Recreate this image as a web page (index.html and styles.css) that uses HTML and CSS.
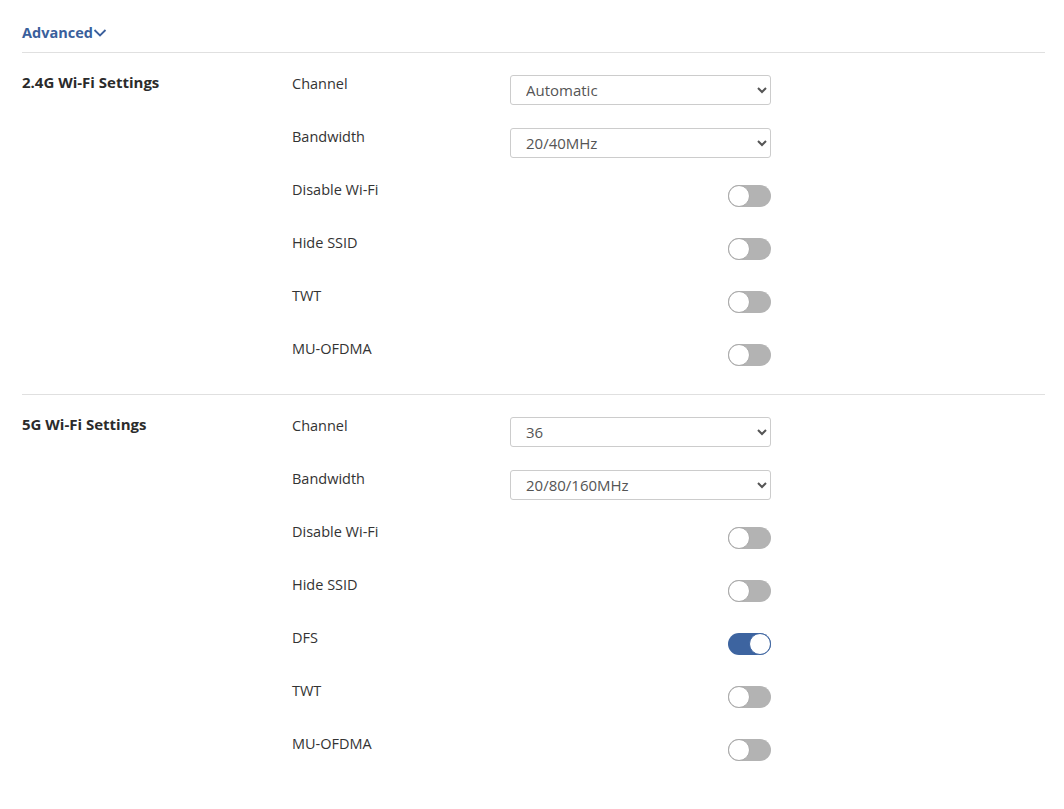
FILE: index.html
```html
<!DOCTYPE html>
<html>
<head>
<meta charset="utf-8">
<link rel="stylesheet" href="styles.css">
</head>
<body>
<div class="page">
  <div class="adv-head">
    <span class="adv-title">Advanced</span>
    <svg class="adv-chev" width="14" height="10" viewBox="0 0 14 10"><path d="M1.5 2 L7 7.5 L12.5 2" fill="none" stroke="#3a5f9c" stroke-width="1.8"/></svg>
  </div>

  <section class="group">
    <div class="group-title">2.4G Wi-Fi Settings</div>
    <div class="rows">
      <div class="row"><div class="label">Channel</div><div class="ctrl"><select class="sel"><option>Automatic</option></select></div></div>
      <div class="row"><div class="label">Bandwidth</div><div class="ctrl"><select class="sel"><option>20/40MHz</option></select></div></div>
      <div class="row"><div class="label">Disable Wi-Fi</div><div class="ctrl"><span class="tog"></span></div></div>
      <div class="row"><div class="label">Hide SSID</div><div class="ctrl"><span class="tog"></span></div></div>
      <div class="row"><div class="label">TWT</div><div class="ctrl"><span class="tog"></span></div></div>
      <div class="row"><div class="label">MU-OFDMA</div><div class="ctrl"><span class="tog"></span></div></div>
    </div>
  </section>

  <section class="group">
    <div class="group-title">5G Wi-Fi Settings</div>
    <div class="rows">
      <div class="row"><div class="label">Channel</div><div class="ctrl"><select class="sel"><option>36</option></select></div></div>
      <div class="row"><div class="label">Bandwidth</div><div class="ctrl"><select class="sel"><option>20/80/160MHz</option></select></div></div>
      <div class="row"><div class="label">Disable Wi-Fi</div><div class="ctrl"><span class="tog"></span></div></div>
      <div class="row"><div class="label">Hide SSID</div><div class="ctrl"><span class="tog"></span></div></div>
      <div class="row"><div class="label">DFS</div><div class="ctrl"><span class="tog on"></span></div></div>
      <div class="row"><div class="label">TWT</div><div class="ctrl"><span class="tog"></span></div></div>
      <div class="row"><div class="label">MU-OFDMA</div><div class="ctrl"><span class="tog"></span></div></div>
    </div>
  </section>
</div>
</body>
</html>
```

FILE: styles.css
```css
*, *::before, *::after { box-sizing: border-box; }
html, body { margin: 0; padding: 0; background: #fff; }
body {
  font-family: "Open Sans", "Noto Sans", "Liberation Sans", sans-serif;
  font-size: 14.5px;
  color: #333;
}
.page {
  padding: 0 19px 0 22px;
}
.adv-head {
  height: 53px;
  border-bottom: 1px solid #e0e0e0;
  display: flex;
  align-items: center;
  padding-top: 12px;
}
.adv-title {
  font-weight: 700;
  color: #3a5f9c;
  font-size: 14.5px;
}
.adv-chev { margin-left: 0px; margin-top: 1px; }
.group {
  display: flex;
  padding: 22px 0 24px;
  border-bottom: 1px solid #e0e0e0;
}
.group:last-child { border-bottom: none; }
.group-title {
  width: 270px;
  font-weight: 700;
  font-size: 15px;
  line-height: 15px;
  color: #2b2b2b;
}
.rows {
  display: flex;
  flex-direction: column;
  gap: 23px;
}
.row {
  display: flex;
  height: 30px;
}
.label {
  width: 218px;
  line-height: 17px;
  color: #333;
}
.ctrl {
  width: 261px;
  display: flex;
  align-items: center;
  justify-content: flex-end;
}
.sel {
  width: 261px;
  height: 30px;
  border: 1px solid #ccc;
  border-radius: 3px;
  background: #fff;
  color: #555;
  font-family: inherit;
  font-size: 15px;
  padding: 0 6px 0 11px;
  outline: none;
}
.tog {
  position: relative;
  display: block;
  width: 43px;
  height: 22px;
  border-radius: 11px;
  background: #b3b3b3;
}
.tog::after {
  content: "";
  position: absolute;
  left: 0;
  top: 0;
  width: 22px;
  height: 22px;
  border-radius: 50%;
  background: #fff;
  border: 1.5px solid #a8a8a8;
}
.tog.on { background: #3d64a0; }
.tog.on::after {
  left: 21px;
  border-color: #3d64a0;
}
```
